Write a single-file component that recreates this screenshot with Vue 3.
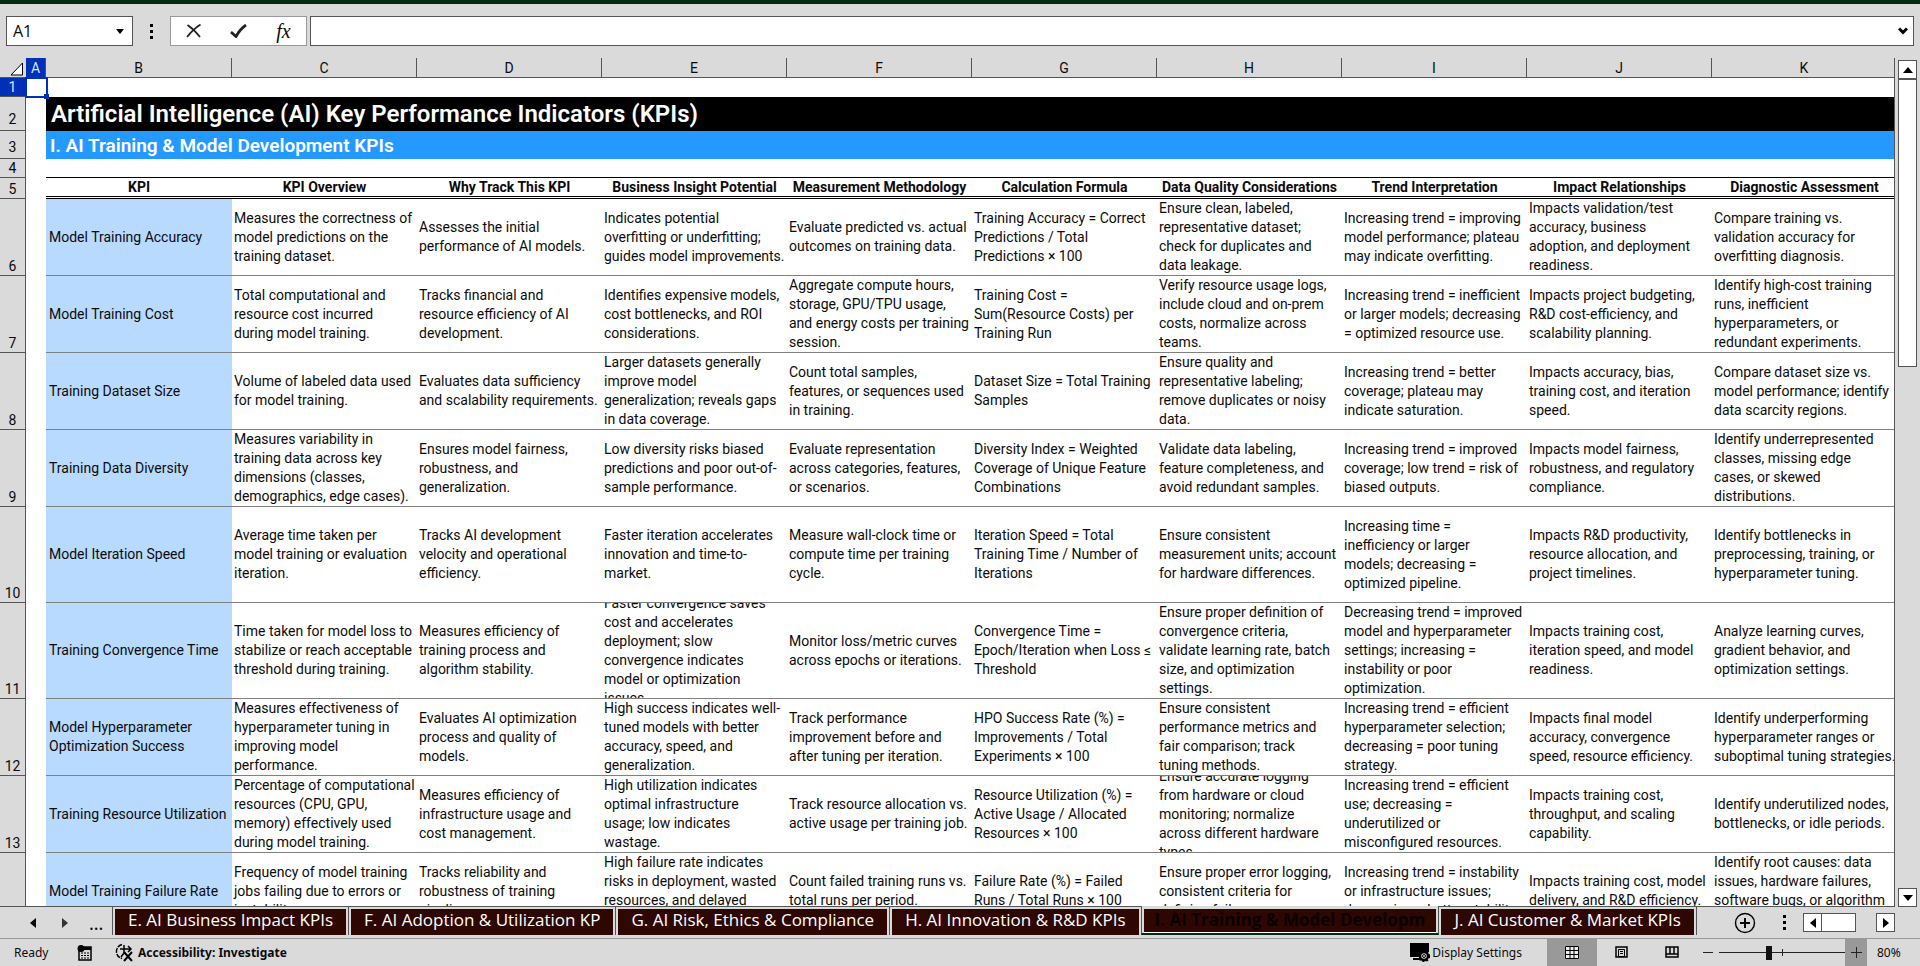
<script setup>
import { ref } from "vue";

const columns = ["B", "C", "D", "E", "F", "G", "H", "I", "J", "K"];

const headings = [
  "KPI",
  "KPI Overview",
  "Why Track This KPI",
  "Business Insight Potential",
  "Measurement Methodology",
  "Calculation Formula",
  "Data Quality Considerations",
  "Trend Interpretation",
  "Impact Relationships",
  "Diagnostic Assessment",
];

const rows = [
  {
    number: 6,
    cells: [
      "Model Training Accuracy",
      "Measures the correctness of\nmodel predictions on the\ntraining dataset.",
      "Assesses the initial\nperformance of AI models.",
      "Indicates potential\noverfitting or underfitting;\nguides model improvements.",
      "Evaluate predicted vs. actual\noutcomes on training data.",
      "Training Accuracy = Correct\nPredictions / Total\nPredictions × 100",
      "Ensure clean, labeled,\nrepresentative dataset;\ncheck for duplicates and\ndata leakage.",
      "Increasing trend = improving\nmodel performance; plateau\nmay indicate overfitting.",
      "Impacts validation/test\naccuracy, business\nadoption, and deployment\nreadiness.",
      "Compare training vs.\nvalidation accuracy for\noverfitting diagnosis.",
    ],
  },
  {
    number: 7,
    cells: [
      "Model Training Cost",
      "Total computational and\nresource cost incurred\nduring model training.",
      "Tracks financial and\nresource efficiency of AI\ndevelopment.",
      "Identifies expensive models,\ncost bottlenecks, and ROI\nconsiderations.",
      "Aggregate compute hours,\nstorage, GPU/TPU usage,\nand energy costs per training\nsession.",
      "Training Cost =\nSum(Resource Costs) per\nTraining Run",
      "Verify resource usage logs,\ninclude cloud and on-prem\ncosts, normalize across\nteams.",
      "Increasing trend = inefficient\nor larger models; decreasing\n= optimized resource use.",
      "Impacts project budgeting,\nR&D cost-efficiency, and\nscalability planning.",
      "Identify high-cost training\nruns, inefficient\nhyperparameters, or\nredundant experiments.",
    ],
  },
  {
    number: 8,
    cells: [
      "Training Dataset Size",
      "Volume of labeled data used\nfor model training.",
      "Evaluates data sufficiency\nand scalability requirements.",
      "Larger datasets generally\nimprove model\ngeneralization; reveals gaps\nin data coverage.",
      "Count total samples,\nfeatures, or sequences used\nin training.",
      "Dataset Size = Total Training\nSamples",
      "Ensure quality and\nrepresentative labeling;\nremove duplicates or noisy\ndata.",
      "Increasing trend = better\ncoverage; plateau may\nindicate saturation.",
      "Impacts accuracy, bias,\ntraining cost, and iteration\nspeed.",
      "Compare dataset size vs.\nmodel performance; identify\ndata scarcity regions.",
    ],
  },
  {
    number: 9,
    cells: [
      "Training Data Diversity",
      "Measures variability in\ntraining data across key\ndimensions (classes,\ndemographics, edge cases).",
      "Ensures model fairness,\nrobustness, and\ngeneralization.",
      "Low diversity risks biased\npredictions and poor out-of-\nsample performance.",
      "Evaluate representation\nacross categories, features,\nor scenarios.",
      "Diversity Index = Weighted\nCoverage of Unique Feature\nCombinations",
      "Validate data labeling,\nfeature completeness, and\navoid redundant samples.",
      "Increasing trend = improved\ncoverage; low trend = risk of\nbiased outputs.",
      "Impacts model fairness,\nrobustness, and regulatory\ncompliance.",
      "Identify underrepresented\nclasses, missing edge\ncases, or skewed\ndistributions.",
    ],
  },
  {
    number: 10,
    tall: true,
    cells: [
      "Model Iteration Speed",
      "Average time taken per\nmodel training or evaluation\niteration.",
      "Tracks AI development\nvelocity and operational\nefficiency.",
      "Faster iteration accelerates\ninnovation and time-to-\nmarket.",
      "Measure wall-clock time or\ncompute time per training\ncycle.",
      "Iteration Speed = Total\nTraining Time / Number of\nIterations",
      "Ensure consistent\nmeasurement units; account\nfor hardware differences.",
      "Increasing time =\ninefficiency or larger\nmodels; decreasing =\noptimized pipeline.",
      "Impacts R&D productivity,\nresource allocation, and\nproject timelines.",
      "Identify bottlenecks in\npreprocessing, training, or\nhyperparameter tuning.",
    ],
  },
  {
    number: 11,
    tall: true,
    cells: [
      "Training Convergence Time",
      "Time taken for model loss to\nstabilize or reach acceptable\nthreshold during training.",
      "Measures efficiency of\ntraining process and\nalgorithm stability.",
      "Faster convergence saves\ncost and accelerates\ndeployment; slow\nconvergence indicates\nmodel or optimization\nissues.",
      "Monitor loss/metric curves\nacross epochs or iterations.",
      "Convergence Time =\nEpoch/Iteration when Loss ≤\nThreshold",
      "Ensure proper definition of\nconvergence criteria,\nvalidate learning rate, batch\nsize, and optimization\nsettings.",
      "Decreasing trend = improved\nmodel and hyperparameter\nsettings; increasing =\ninstability or poor\noptimization.",
      "Impacts training cost,\niteration speed, and model\nreadiness.",
      "Analyze learning curves,\ngradient behavior, and\noptimization settings.",
    ],
  },
  {
    number: 12,
    cells: [
      "Model Hyperparameter\nOptimization Success",
      "Measures effectiveness of\nhyperparameter tuning in\nimproving model\nperformance.",
      "Evaluates AI optimization\nprocess and quality of\nmodels.",
      "High success indicates well-\ntuned models with better\naccuracy, speed, and\ngeneralization.",
      "Track performance\nimprovement before and\nafter tuning per iteration.",
      "HPO Success Rate (%) =\nImprovements / Total\nExperiments × 100",
      "Ensure consistent\nperformance metrics and\nfair comparison; track\ntuning methods.",
      "Increasing trend = efficient\nhyperparameter selection;\ndecreasing = poor tuning\nstrategy.",
      "Impacts final model\naccuracy, convergence\nspeed, resource efficiency.",
      "Identify underperforming\nhyperparameter ranges or\nsuboptimal tuning strategies.",
    ],
  },
  {
    number: 13,
    cells: [
      "Training Resource Utilization",
      "Percentage of computational\nresources (CPU, GPU,\nmemory) effectively used\nduring model training.",
      "Measures efficiency of\ninfrastructure usage and\ncost management.",
      "High utilization indicates\noptimal infrastructure\nusage; low indicates\nwastage.",
      "Track resource allocation vs.\nactive usage per training job.",
      "Resource Utilization (%) =\nActive Usage / Allocated\nResources × 100",
      "Ensure accurate logging\nfrom hardware or cloud\nmonitoring; normalize\nacross different hardware\ntypes.",
      "Increasing trend = efficient\nuse; decreasing =\nunderutilized or\nmisconfigured resources.",
      "Impacts training cost,\nthroughput, and scaling\ncapability.",
      "Identify underutilized nodes,\nbottlenecks, or idle periods.",
    ],
  },
  {
    number: 14,
    cells: [
      "Model Training Failure Rate",
      "Frequency of model training\njobs failing due to errors or\ninstability.",
      "Tracks reliability and\nrobustness of training\npipelines.",
      "High failure rate indicates\nrisks in deployment, wasted\nresources, and delayed\ndelivery.",
      "Count failed training runs vs.\ntotal runs per period.",
      "Failure Rate (%) = Failed\nRuns / Total Runs × 100",
      "Ensure proper error logging,\nconsistent criteria for\ndefining failure.",
      "Increasing trend = instability\nor infrastructure issues;\ndecreasing = better stability.",
      "Impacts training cost, model\ndelivery, and R&D efficiency.",
      "Identify root causes: data\nissues, hardware failures,\nsoftware bugs, or algorithm\nerrors.",
    ],
  },
];

const tabs = [
  "E. AI Business Impact KPIs",
  "F. AI Adoption & Utilization KP",
  "G. AI Risk, Ethics & Compliance",
  "H. AI Innovation & R&D KPIs",
  "I. AI Training & Model Developm",
  "J. AI Customer & Market KPIs",
];

const activeTab = ref(4);
const cellName = ref("A1");
const formula = ref("");
const zoom = ref(39);
</script>

<template>
  <div class="excel">
    <div class="ribbon-edge"></div>

    <div class="formula-bar">
      <div class="name-box">
        <input v-model="cellName" type="text" aria-label="Name box" />
        <button type="button" aria-label="Show names">
          <svg width="8" height="5" viewBox="0 0 8 5"><path d="M0 0h8L4 5z" /></svg>
        </button>
      </div>
      <span class="dots"><i></i><i></i><i></i></span>
      <div class="formula-tools">
        <button type="button" aria-label="Cancel">
          <svg width="16" height="16" viewBox="0 0 16 16">
            <path d="M1.500 2C6 5 10 9 14 14M14.500 1.500C9 5 5 9 1 14" fill="none" stroke="#222" stroke-width="1.800" />
          </svg>
        </button>
        <button type="button" aria-label="Enter">
          <svg width="17" height="14" viewBox="0 0 17 14">
            <path d="M1 8l5 4.500C8.500 8 11.500 4 16 1" fill="none" stroke="#222" stroke-width="2.800" />
          </svg>
        </button>
        <button type="button" class="fx" aria-label="Insert function">fx</button>
      </div>
      <div class="formula-input">
        <input v-model="formula" type="text" aria-label="Formula bar" />
        <button type="button" aria-label="Expand formula bar">
          <svg width="10" height="8" viewBox="0 0 10 8"><path d="M1 1.500l4 4 4-4" fill="none" stroke="#000" stroke-width="3" /></svg>
        </button>
      </div>
    </div>

    <main class="workspace">
      <div class="sheet">
        <table>
          <colgroup>
            <col class="col-number" />
            <col class="col-a" />
            <col v-for="column in columns" :key="column" class="col-data" />
          </colgroup>
          <thead>
            <tr>
              <th class="corner">
                <svg width="14" height="14" viewBox="0 0 14 14">
                  <path d="M12.500 1v12H1z" fill="#fff" stroke="#000" />
                </svg>
              </th>
              <th class="letter selected">A</th>
              <th v-for="column in columns" :key="column" class="letter">{{ column }}</th>
            </tr>
          </thead>
          <tbody>
            <tr class="small">
              <th class="number selected">1</th>
              <td class="cursor-cell"><span class="cursor"></span></td>
              <td colspan="10"></td>
            </tr>
            <tr class="title">
              <th class="number">2</th>
              <td></td>
              <td colspan="10">Artificial Intelligence (AI) Key Performance Indicators (KPIs)</td>
            </tr>
            <tr class="subtitle">
              <th class="number">3</th>
              <td></td>
              <td colspan="10">I. AI Training &amp; Model Development KPIs</td>
            </tr>
            <tr class="small">
              <th class="number">4</th>
              <td></td>
              <td colspan="10" class="top-rule"></td>
            </tr>
            <tr class="headings">
              <th class="number">5</th>
              <td></td>
              <th v-for="heading in headings" :key="heading" class="heading">{{ heading }}</th>
            </tr>
            <tr v-for="row in rows" :key="row.number" class="data" :class="{ tall: row.tall }">
              <th class="number">{{ row.number < 14 ? row.number : "" }}</th>
              <td></td>
              <td v-for="(cell, index) in row.cells" :key="index" class="cell">
                <div class="clip">{{ cell }}</div>
              </td>
            </tr>
          </tbody>
        </table>
      </div>

      <div class="scroll-y">
        <button type="button" aria-label="Scroll up">
          <svg width="10" height="6" viewBox="0 0 10 6"><path d="M0 6h10L5 0z" /></svg>
        </button>
        <span class="thumb"></span>
        <button type="button" aria-label="Scroll down">
          <svg width="10" height="6" viewBox="0 0 10 6"><path d="M0 0h10L5 6z" /></svg>
        </button>
      </div>
    </main>

    <nav class="tab-bar">
      <div class="tab-nav">
        <button type="button" aria-label="Previous sheet">
          <svg width="6" height="10" viewBox="0 0 6 10"><path d="M6 0v10L0 5z" /></svg>
        </button>
        <button type="button" aria-label="Next sheet">
          <svg width="6" height="10" viewBox="0 0 6 10"><path d="M0 0v10l6-5z" fill="#333" /></svg>
        </button>
        <button type="button" aria-label="More sheets">...</button>
      </div>
      <div class="tabs">
        <button
          v-for="(tab, index) in tabs"
          :key="tab"
          type="button"
          class="tab"
          :class="{ active: index == activeTab }"
          @click="activeTab = index"
        >
          <span>{{ tab }}</span>
        </button>
      </div>
      <div class="tab-tools">
        <button type="button" class="add" aria-label="New sheet">
          <svg width="22" height="22" viewBox="0 0 22 22" fill="none" stroke="#000">
            <circle cx="11" cy="11" r="9.500" stroke-width="1.400" />
            <path d="M11 6v10M6 11h10" stroke-width="2" />
          </svg>
        </button>
        <span class="dots"><i></i><i></i><i></i></span>
        <div class="scroll-x">
          <button type="button" aria-label="Scroll left">
            <svg width="6" height="10" viewBox="0 0 6 10"><path d="M6 0v10L0 5z" /></svg>
          </button>
          <span class="thumb"></span>
          <button type="button" aria-label="Scroll right">
            <svg width="6" height="10" viewBox="0 0 6 10"><path d="M0 0v10l6-5z" /></svg>
          </button>
        </div>
      </div>
    </nav>

    <footer class="status-bar">
      <span class="ready">Ready</span>
      <button type="button" class="macro" aria-label="Record macro">
        <svg width="16" height="16" viewBox="0 0 16 16">
          <path d="M2 3v12h12V2H5" fill="none" stroke="#000" stroke-width="1.500" />
          <path d="M5 2h9v3H5z" />
          <path d="M4 8h2M7 8h2M10 8h2M4 10.500h2M7 10.500h2M10 10.500h2M4 13h2M7 13h2M10 13h2" stroke="#000" />
          <circle cx="4" cy="3.500" r="3.500" />
        </svg>
      </button>
      <button type="button" class="accessibility">
        <svg width="19" height="19" viewBox="0 0 19 19" fill="none" stroke="#000">
          <path d="M7 1.500C3 2.500 1 6 1.500 9.500s2.500 5 5.500 6" stroke-width="1.500" stroke-dasharray="5 1" />
          <path d="M5 6h11M13 3l3 3-3 3M9 2v8l-3 4" stroke-width="1.500" />
          <path d="M9 9l8 9M17 9l-8 9" stroke-width="2" />
        </svg>
        Accessibility: Investigate
      </button>

      <button type="button" class="display">
        <svg width="20" height="19" viewBox="0 0 20 19">
          <path d="M0 0h19v9h-9v5H0zM3 15h7v2H3z" />
          <circle cx="14" cy="13" r="4" fill="#dadada" stroke="#000" stroke-width="2.500" />
          <circle cx="14" cy="13" r="5.500" fill="none" stroke="#000" stroke-width="1.500" stroke-dasharray="2 2" />
          <circle cx="14" cy="13" r="1.500" fill="none" stroke="#000" />
        </svg>
        Display Settings
      </button>
      <button type="button" class="view current" aria-label="Normal view">
        <svg width="14" height="13" viewBox="0 0 14 13">
          <path d="M0 0h14v13H0z" fill="#eee" />
          <path d="M.5.5h13v12H.5zM.5 4.500h13M.5 8.500h13M5 .5v12M9 .5v12" fill="none" stroke="#000" />
        </svg>
      </button>
      <button type="button" class="view" aria-label="Page layout">
        <svg width="14" height="13" viewBox="0 0 14 13" fill="none" stroke="#000">
          <path d="M1 1h11v10H1z" stroke-width="1.500" />
          <path d="M3.500 3.500h6v7h-6zM5 5.500h3M5 7.500h3" />
        </svg>
      </button>
      <button type="button" class="view" aria-label="Page break preview">
        <svg width="14" height="13" viewBox="0 0 14 13" fill="none" stroke="#000">
          <path d="M1 1h12v10H1zM1 8h12M5 1v7M9 1v7" stroke-width="1.500" />
        </svg>
      </button>
      <div class="zoom">
        <button type="button" aria-label="Zoom out">
          <svg width="10" height="11" viewBox="0 0 10 11"><path d="M0 5.500h10" stroke="#222" /></svg>
        </button>
        <input v-model="zoom" type="range" min="0" max="100" aria-label="Zoom" />
        <button type="button" class="plus" aria-label="Zoom in">
          <svg width="11" height="11" viewBox="0 0 11 11"><path d="M0 5.500h11M5.500 0v11" stroke="#222" /></svg>
        </button>
        <span class="percent">80%</span>
      </div>
    </footer>
  </div>
</template>

<style>
body {
  margin: 0;
  overflow: hidden;
}
</style>

<style scoped>
* {
  box-sizing: border-box;
}

.excel {
  height: 100vh;
  display: flex;
  flex-direction: column;
  background-color: #dadada;
  color: #0b0b0b;
  font-family: "Noto Sans", "Open Sans", sans-serif;
  font-size: 12px;
}

button {
  display: flex;
  align-items: center;
  justify-content: center;
  border: 0;
  padding: 0;
  background: none;
  color: inherit;
  font: inherit;
  white-space: nowrap;
}

svg {
  display: block;
  flex: none;
}

.ribbon-edge {
  height: 4px;
  flex: none;
  background-color: #042b10;
}

/* formula bar */
.formula-bar {
  display: flex;
  flex: none;
  padding: 12px 6px;
}

.formula-bar input {
  flex: 1;
  min-width: 0;
  border: 0;
  padding: 0 6px;
  outline: 0;
  background: none;
  color: inherit;
  font-family: "Open Sans", sans-serif;
  font-size: 16px;
}

.name-box,
.formula-input {
  height: 30px;
  display: flex;
  border: 1px solid #555;
  background-color: #fff;
}

.name-box {
  width: 127px;
}

.name-box button {
  width: 24px;
}

.formula-input {
  flex: 1;
  margin-left: 3px;
}

.formula-input button {
  width: 20px;
}

.dots {
  width: 37px;
  display: flex;
  flex-direction: column;
  align-items: center;
  justify-content: center;
  gap: 3px;
}

.dots i {
  width: 3px;
  height: 3px;
  background-color: #000;
}

.formula-tools {
  width: 137px;
  display: flex;
  justify-content: space-around;
  border: 1px solid #999;
  background-color: #fff;
}

.formula-tools button {
  width: 45px;
}

.fx {
  font-family: "Liberation Serif", serif;
  font-size: 20px;
  font-style: italic;
}

/* sheet */
.workspace {
  flex: 1;
  min-height: 0;
  display: flex;
}

.sheet {
  flex: 1;
  min-width: 0;
  overflow: hidden;
  background-color: #fff;
  border-right: 1px solid #555;
  border-bottom: 1px solid #555;
}

table {
  width: 1897px;
  table-layout: fixed;
  border-spacing: 0;
  font-family: Roboto, sans-serif;
  font-size: 14px;
  line-height: 19px;
}

.col-number {
  width: 26px;
}

.col-a {
  width: 20px;
}

.col-data {
  width: 185px;
}

.col-data:nth-child(3) {
  width: 186px;
}

th,
td {
  padding: 0;
}

.corner,
.letter {
  height: 20px;
  border-right: 1px solid #555;
  border-bottom: 1px solid #555;
  background-color: #dadada;
  font-weight: normal;
}

.letter {
  padding-top: 1px;
  line-height: 18px;
}

.corner {
  border-right-color: #dadada;
  line-height: 0;
}

.corner svg {
  margin: 2px 0 0 10px;
}

.number {
  border-right: 1px solid #555;
  border-bottom: 1px solid #555;
  background-color: #dadada;
  font-weight: normal;
  line-height: 18px;
  vertical-align: bottom;
}

.selected {
  background-color: #0030b8;
  color: #cfe8ff;
}

.small {
  height: 19px;
}

.cursor-cell {
  position: relative;
}

.cursor {
  position: absolute;
  inset: -1px -2px -1px -1px;
  border: 2px solid #0030b8;
}

.cursor::after {
  content: "";
  position: absolute;
  right: -3px;
  bottom: -3px;
  width: 5px;
  height: 5px;
  background-color: #0030b8;
}

.title {
  height: 34px;
  font-size: 24px;
  font-weight: 600;
}

.title td:last-child {
  padding-left: 5px;
  background-color: #000;
  color: #fff;
}

.subtitle {
  height: 28px;
  font-size: 19px;
  font-weight: 600;
}

.subtitle td:last-child {
  padding-left: 4px;
  background-color: #2499ff;
  color: #fff;
}

.title .number,
.subtitle .number {
  padding-bottom: 2px;
  font-size: 14px;
}

.top-rule {
  border-bottom: 1px solid #000;
}

.headings {
  height: 21px;
}

.heading {
  border-bottom: 3px double #000;
  line-height: 18px;
  white-space: nowrap;
}

.clip {
  height: 76px;
  display: flex;
  align-items: center;
  overflow: hidden;
  padding-left: 2px;
  white-space: pre;
}

.tall .clip {
  height: 95px;
}

.cell {
  border-bottom: 1px solid #808080;
}

.cell:nth-child(3) {
  background-color: #b8daff;
}

.cell:nth-child(3) .clip {
  padding-left: 3px;
}

/* scroll bars */
.scroll-y {
  width: 25px;
  display: flex;
  flex-direction: column;
  align-items: center;
  padding-top: 2px;
}

.scroll-y button,
.scroll-x button {
  width: 19px;
  height: 19px;
  border: 1px solid #555;
  background-color: #fff;
}

.scroll-y .thumb {
  width: 19px;
  height: 34%;
  border: 1px solid #555;
  background-color: #fff;
}

.scroll-y button:last-child {
  margin-top: auto;
}

.scroll-x {
  display: flex;
}

.scroll-x .thumb {
  width: 34px;
  margin-right: 20px;
  border: 1px solid #555;
  border-left: 0;
  background-color: #fff;
}

/* sheet tabs */
.tab-bar {
  height: 32px;
  flex: none;
  display: flex;
  border-bottom: 1px solid #999;
}

.tab-nav {
  display: flex;
  width: 112px;
  flex: none;
  padding-left: 17px;
}

.tab-nav button {
  width: 32px;
  font-size: 18px;
}

.tabs {
  display: flex;
}

.tab {
  height: 28px;
  padding: 2px 2px 0;
  border-left: 1px solid #555;
  font-family: "Open Sans", sans-serif;
  font-size: 17px;
}

.tab:last-child {
  border-right: 1px solid #555;
}

.tab span {
  height: 26px;
  padding: 0 13px;
  background-color: #2e0702;
  color: #fff;
  line-height: 21px;
}

.tab.active {
  height: 29px;
  margin-top: -1px;
  padding-top: 3px;
  align-items: flex-start;
  border-right: 1px solid #555;
  border-bottom: 2px solid #042b10;
  background-color: #dadada;
}

.tab.active + .tab {
  border-left: 0;
}

.tab.active span {
  height: 24px;
  padding: 0 11px;
  border-bottom: 1px solid #fff;
  color: #0b0000;
  font-weight: bold;
}

.tab-tools {
  display: flex;
  align-items: center;
  margin-left: auto;
  padding-right: 25px;
}

.add {
  width: 22px;
  margin-right: 10px;
}

/* status bar */
.status-bar {
  height: 27px;
  flex: none;
  display: flex;
  align-items: center;
  padding-left: 14px;
}

.ready {
  width: 63px;
}

.macro {
  width: 16px;
}

.accessibility {
  gap: 4px;
  margin-left: 22px;
  font-weight: bold;
}

.display {
  gap: 2px;
  margin-left: auto;
  margin-right: 25px;
}

.view {
  width: 50px;
  height: 27px;
}

.view.current {
  background-color: #999;
}

.zoom {
  height: 27px;
  display: flex;
  align-items: center;
  margin-left: 6px;
}

.zoom input {
  width: 126px;
  height: 27px;
  margin: 0 0 0 6px;
  appearance: none;
  background:
    linear-gradient(#222, #222) center / 1px 7px no-repeat,
    linear-gradient(#222, #222) center / 100% 1px no-repeat;
}

.zoom input::-webkit-slider-thumb {
  appearance: none;
  width: 6px;
  height: 14px;
  background-color: #111;
}

.plus {
  width: 22px;
  height: 27px;
  background-color: #999;
}

.percent {
  width: 53px;
  padding-left: 10px;
}
</style>
